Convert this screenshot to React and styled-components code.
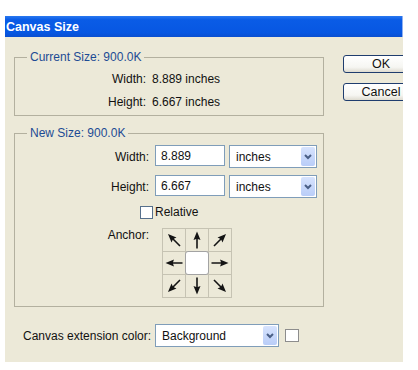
import React from "react";
import styled, { createGlobalStyle } from "styled-components";

const Global = createGlobalStyle`
  body {
    margin: 0;
    background: #fff;
    font-family: "Liberation Sans", Arial, sans-serif;
    font-size: 12px;
    color: #111;
  }
`;

const Dialog = styled.div`
  margin: 16px 0 0 5px;
  width: 398px;
  height: 346px;
  background: #ece9d8;
  overflow: hidden;
`;

const TitleBar = styled.div`
  height: 21px;
  display: flex;
  align-items: center;
  padding-left: 1px;
  background: linear-gradient(#2a78f0 0%, #0a5ce6 18%, #0757e2 80%, #0a4fd0 100%);
  border-right: 1px solid #8fb0f0;
  color: #fff;
  font-weight: bold;
  font-size: 12.5px;
`;

const Body = styled.div`
  display: flex;
  gap: 19px;
  padding-left: 9px;
`;

const LeftColumn = styled.div`
  width: 310px;
  flex-shrink: 0;
  display: flex;
  flex-direction: column;
`;

const RightColumn = styled.div`
  flex-shrink: 0;
  display: flex;
  flex-direction: column;
  gap: 10px;
  padding-top: 18px;
`;

const GroupBox = styled.fieldset`
  margin: ${(p) => p.$top}px 0 0 0;
  padding: ${(p) => p.$pad};
  border: 1px solid #b3b09f;
  min-width: 0;
  display: flex;
  flex-direction: column;
`;

const Legend = styled.legend`
  margin-left: 12px;
  padding: 0 3px;
  line-height: 14px;
  color: #1d4b94;
`;

const InfoRow = styled.div`
  display: grid;
  grid-template-columns: 131px auto;
  column-gap: 6px;
  align-items: center;
  height: 23px;
`;

const Label = styled.span`
  text-align: right;
  white-space: nowrap;
`;

const FieldRow = styled.div`
  display: grid;
  grid-template-columns: 134px 70px auto;
  column-gap: 6px;
  align-items: center;
  height: 23px;
  margin-top: ${(p) => p.$top}px;

  & > :nth-child(3) {
    margin-left: -2px;
  }
`;

const TextBox = styled.div`
  height: 21px;
  box-sizing: border-box;
  border: 1px solid #7f9db9;
  background: #fff;
  padding-left: 5px;
  display: flex;
  align-items: center;
  margin-top: -2px;
`;

const Dropdown = styled.div`
  width: ${(p) => p.$width}px;
  height: 23px;
  box-sizing: border-box;
  border: 1px solid #7f9db9;
  background: #fff;
  display: flex;
  align-items: center;
  justify-content: space-between;
  padding: 1px 1px 1px 6px;
  font-size: 12px;
`;

const DropArrow = styled.div`
  width: 14px;
  height: 19px;
  border-radius: 2px;
  background: linear-gradient(#d7e3fd, #b9cdf8);
  display: flex;
  align-items: center;
  justify-content: center;
`;

const CheckRow = styled.div`
  display: flex;
  align-items: center;
  gap: 2px;
  padding-left: 125px;
  margin-top: 7px;
  height: 14px;
`;

const CheckBox = styled.div`
  width: 13px;
  height: 13px;
  box-sizing: border-box;
  border: 1px solid #56708c;
  background: #fff;
`;

const AnchorRow = styled.div`
  display: grid;
  grid-template-columns: 134px auto;
  column-gap: 13px;
  align-items: start;
  margin-top: 9px;
`;

const AnchorLabel = styled(Label)`
  line-height: 14px;
`;

const AnchorGrid = styled.div`
  display: grid;
  grid-template-columns: repeat(3, 22px);
  grid-auto-rows: 22px;
  gap: 1px;
  padding: 1px;
  width: max-content;
  background: #c6c3b3;
`;

const Cell = styled.div`
  background: #ece9d8;
  display: flex;
  align-items: center;
  justify-content: center;
`;

const CenterCell = styled.div`
  background: #fff;
  border: 1px solid #a3a3a3;
  border-radius: 3px;
  margin: -1px;
`;

const ExtensionRow = styled.div`
  display: grid;
  grid-template-columns: 126px auto auto;
  column-gap: 6px;
  align-items: center;
  justify-content: start;
  margin-top: 17px;
  padding-left: 9px;
  white-space: nowrap;
`;

const Swatch = styled.div`
  width: 14px;
  height: 13px;
  box-sizing: border-box;
  border: 1px solid #8d8d8d;
  background: #fff;
`;

const Button = styled.div`
  width: 76px;
  height: 18px;
  box-sizing: border-box;
  border: 1px solid #1f3d6e;
  border-radius: 3px;
  background: linear-gradient(#ffffff 0%, #f6f6f2 70%, #dedbd0 100%);
  display: flex;
  align-items: center;
  justify-content: center;
  font-size: 12.5px;
`;

const Chevron = () => (
  <svg width="10" height="8" viewBox="0 0 10 8">
    <path d="M2 2 L5 5 L8 2" fill="none" stroke="#4a5f86" strokeWidth="2" />
  </svg>
);

const Select = ({ value, width }) => (
  <Dropdown $width={width}>
    <span>{value}</span>
    <DropArrow>
      <Chevron />
    </DropArrow>
  </Dropdown>
);

const Arrow = ({ angle }) => (
  <svg width="22" height="22" viewBox="0 0 22 22">
    <g transform={`rotate(${angle} 11 11)`}>
      <path
        d="M11 2.5 L14.5 11 L11.8 10 L11.8 19.5 L10.2 19.5 L10.2 10 L7.5 11 Z"
        fill="#141414"
      />
    </g>
  </svg>
);

const anchorCells = [315, 0, 45, 270, null, 90, 225, 180, 135];

export default function App() {
  return (
    <>
      <Global />
      <Dialog>
        <TitleBar>Canvas Size</TitleBar>
        <Body>
          <LeftColumn>
            <GroupBox $top={13} $pad="3px 0 2px 0">
              <Legend>Current Size: 900.0K</Legend>
              <InfoRow>
                <Label>Width:</Label>
                <span>8.889 inches</span>
              </InfoRow>
              <InfoRow>
                <Label>Height:</Label>
                <span>6.667 inches</span>
              </InfoRow>
            </GroupBox>

            <GroupBox $top={10} $pad="0 0 8px 0">
              <Legend>New Size: 900.0K</Legend>
              <FieldRow $top={5}>
                <Label>Width:</Label>
                <TextBox>8.889</TextBox>
                <Select value="inches" width={88} />
              </FieldRow>
              <FieldRow $top={7}>
                <Label>Height:</Label>
                <TextBox>6.667</TextBox>
                <Select value="inches" width={88} />
              </FieldRow>
              <CheckRow>
                <CheckBox />
                <span>Relative</span>
              </CheckRow>
              <AnchorRow>
                <AnchorLabel>Anchor:</AnchorLabel>
                <AnchorGrid>
                  {anchorCells.map((a, i) =>
                    a === null ? (
                      <CenterCell key={i} />
                    ) : (
                      <Cell key={i}>
                        <Arrow angle={a} />
                      </Cell>
                    )
                  )}
                </AnchorGrid>
              </AnchorRow>
            </GroupBox>

            <ExtensionRow>
              <span>Canvas extension color:</span>
              <Select value="Background" width={124} />
              <Swatch />
            </ExtensionRow>
          </LeftColumn>

          <RightColumn>
            <Button>OK</Button>
            <Button>Cancel</Button>
          </RightColumn>
        </Body>
      </Dialog>
    </>
  );
}
